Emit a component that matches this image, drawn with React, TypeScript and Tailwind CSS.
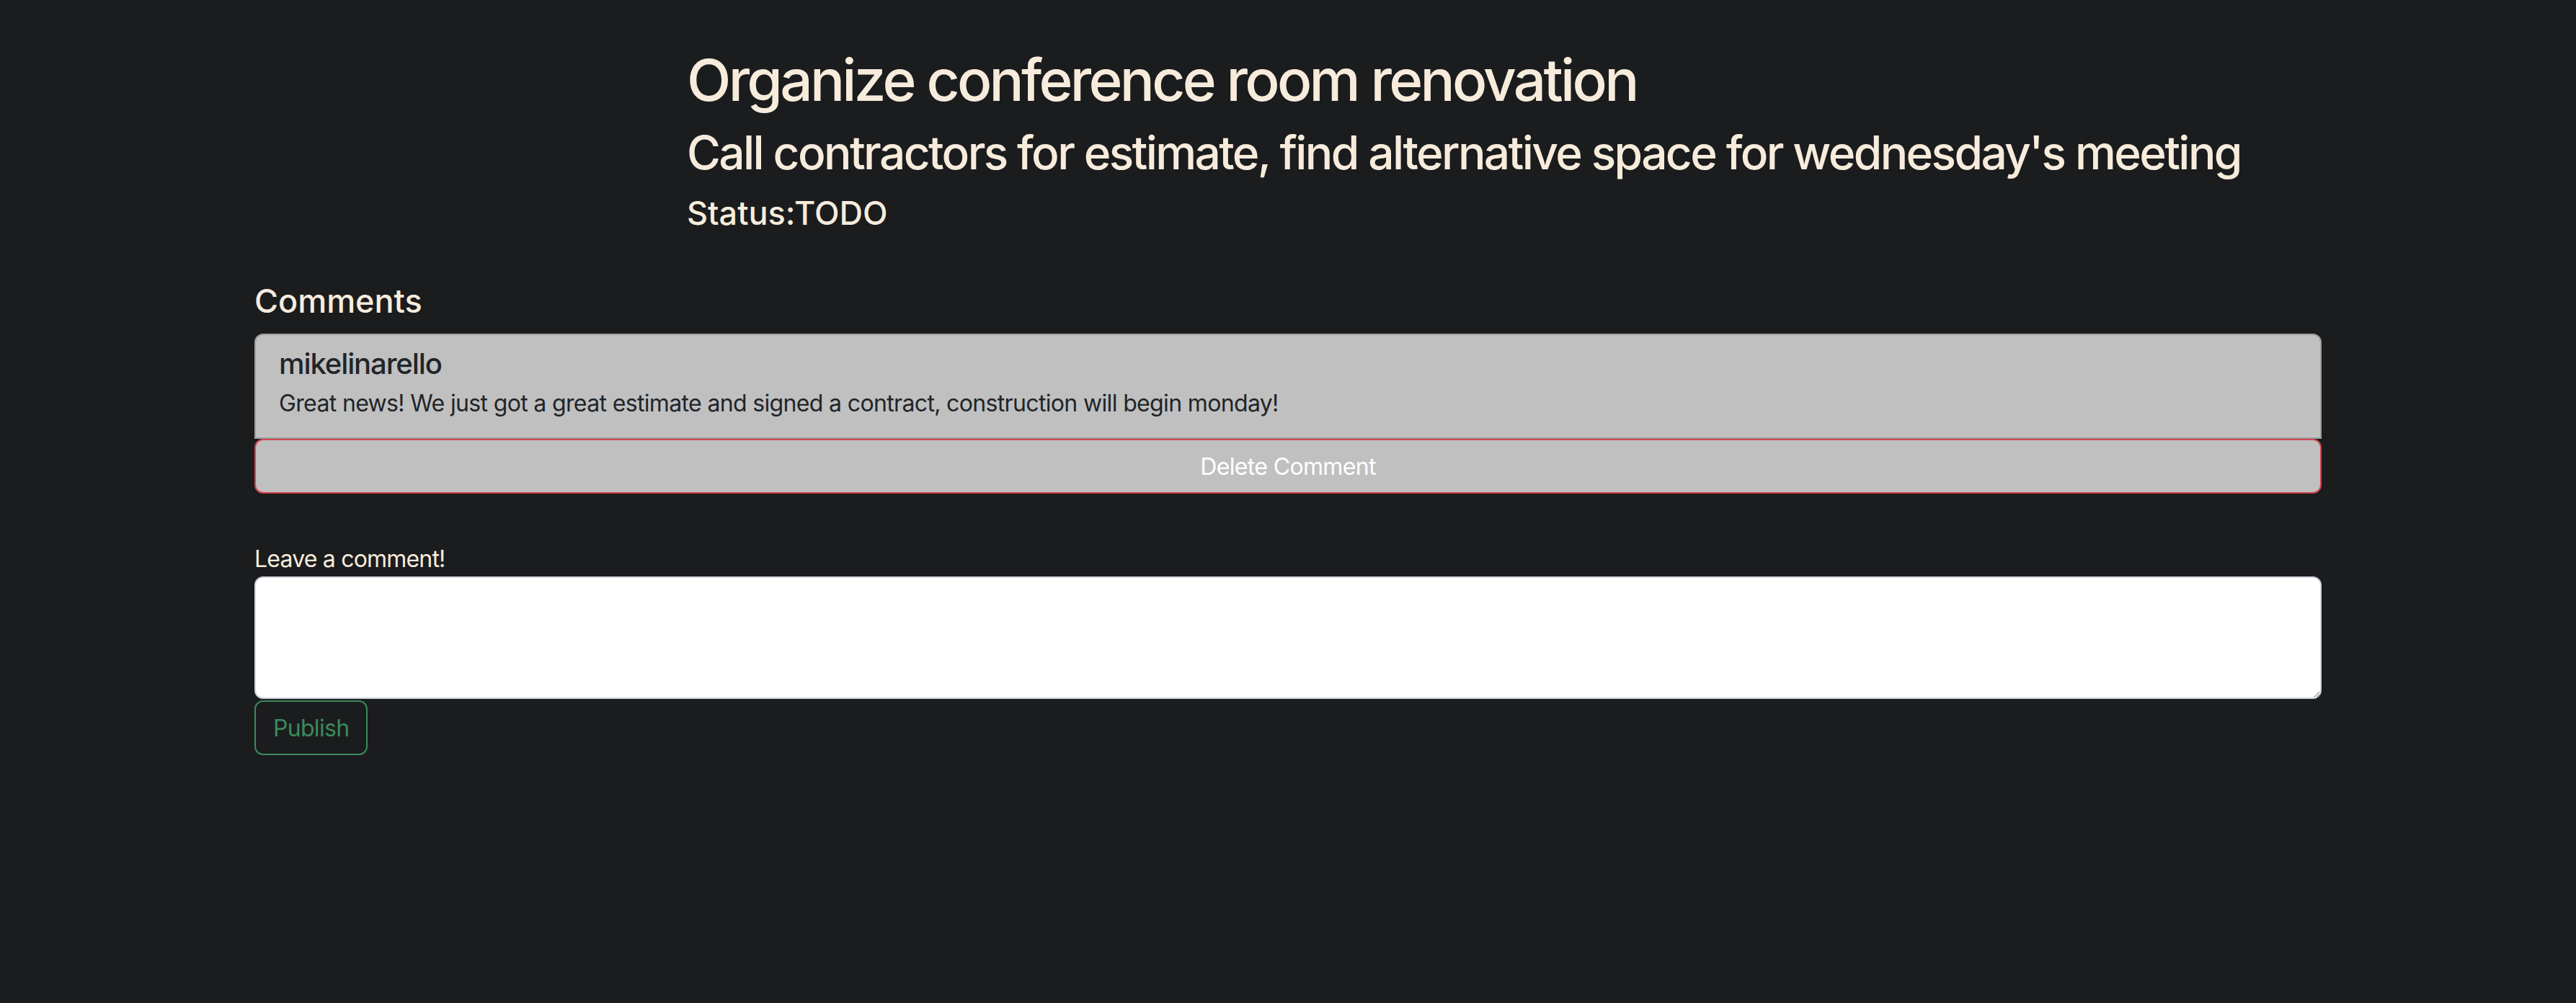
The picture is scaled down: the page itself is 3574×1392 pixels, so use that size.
import React from "react";

export default function App() {
  return (
    <div className="w-full min-h-[1392px] bg-[#1b1c1e] font-['Inter','Liberation_Sans',sans-serif] text-[#f7ecdc]">
      <div className="pl-[953px] pt-[63px]">
        <h1 className="text-[80px] leading-[96px] font-medium tracking-[-3.7px]">Organize conference room renovation</h1>
        <h2 className="mt-[14px] text-[64px] leading-[77px] font-medium tracking-[-2.6px]">
          Call contractors for estimate, find alternative space for wednesday's meeting
        </h2>
        <h4 className="mt-[19px] text-[45px] leading-[53px] font-medium">Status:TODO</h4>
      </div>

      <div className="mx-auto w-[2868px] mt-[69px]">
        <h4 className="text-[45px] leading-[53px] font-medium">Comments</h4>

        <div className="mt-[19px] flex flex-col">
          <div className="rounded-t-[12px] border-2 border-[#9f9f9f] bg-[#c0c0c0] px-[32px] pt-[16px] pb-[23px] text-[#212529]">
            <h5 className="text-[40px] leading-[48px] font-medium tracking-[-1.1px]">mikelinarello</h5>
            <p className="mt-[7px] text-[32px] leading-[48px] tracking-[-0.65px]">
              Great news! We just got a great estimate and signed a contract, construction will begin monday!
            </p>
          </div>
          <button
            type="button"
            className="h-[76px] w-full rounded-[12px] border-2 border-[#d2444f] bg-[#c0c0c0] pt-[2px] text-[32px] leading-[48px] tracking-[-0.65px] text-white"
          >
            Delete Comment
          </button>
        </div>

        <div className="mt-[67px] flex flex-col items-start">
          <label className="text-[32px] leading-[48px] tracking-[-0.8px]">Leave a comment!</label>
          <textarea
            rows={3}
            className="block h-[170px] w-full rounded-[12px] border-2 border-[#ced4da] bg-white px-[24px] py-[12px] text-[32px] leading-[48px] text-[#212529] outline-none"
          />
          <button
            type="button"
            className="mt-[2px] h-[76px] rounded-[12px] border-2 border-[#3b8a5a] px-[24px] pt-[2px] text-[32px] leading-[48px] tracking-[-0.7px] text-[#3b8a5a]"
          >
            Publish
          </button>
        </div>
      </div>
    </div>
  );
}
